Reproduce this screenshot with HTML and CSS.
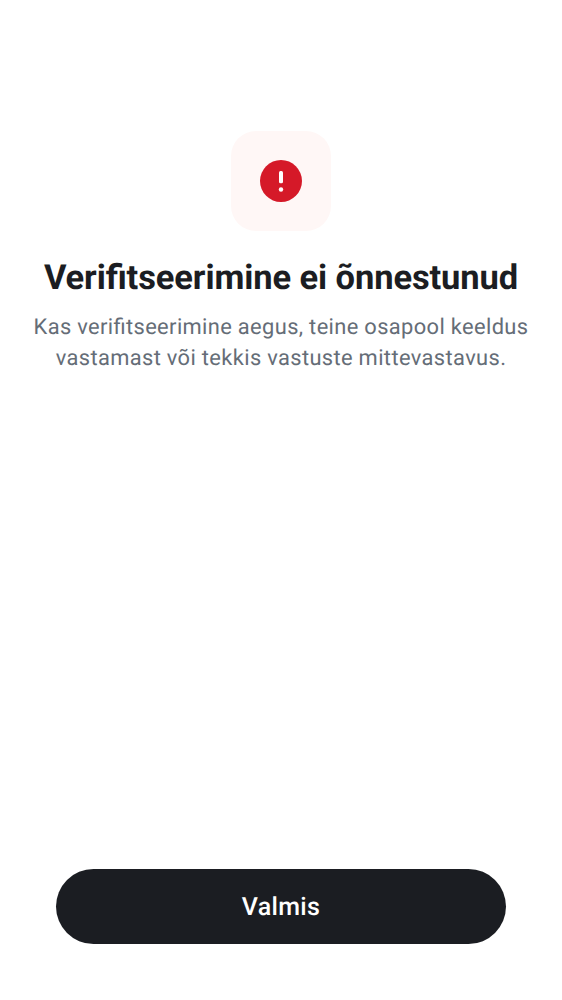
FILE: index.html
```
<!DOCTYPE html>
<html lang="et">
<head>
<meta charset="utf-8">
<title>Verifitseerimine</title>
<link rel="stylesheet" href="styles.css">
</head>
<body>
<main class="screen">
  <div class="badge">
    <svg class="badge-icon" viewBox="0 0 42 42" aria-hidden="true">
      <circle cx="21" cy="21" r="21" fill="#d51928"/>
      <rect x="19" y="11" width="4" height="12.2" rx="1.5" fill="#fff"/>
      <circle cx="21" cy="29.5" r="2.2" fill="#fff"/>
    </svg>
  </div>
  <h1 class="title">Verifitseerimine ei õnnestunud</h1>
  <p class="message">Kas verifitseerimine aegus, teine osapool keeldus<br>vastamast või tekkis vastuste mittevastavus.</p>
  <button class="done">Valmis</button>
</main>
</body>
</html>
```

FILE: styles.css
```
body {
  margin: 0;
  background: #fff;
  font-family: Roboto, sans-serif;
  text-rendering: geometricPrecision;
}

.screen {
  box-sizing: border-box;
  height: 1000px;
  padding: 131px 0 56px;
  display: flex;
  flex-direction: column;
  align-items: center;
}

.badge {
  width: 100px;
  height: 100px;
  border-radius: 25px;
  background: #fff7f6;
  display: flex;
  align-items: center;
  justify-content: center;
}

.badge-icon {
  width: 42px;
  height: 42px;
}

.title {
  margin: 25px 0 0;
  font-size: 34.5px;
  line-height: 44px;
  font-weight: 700;
  letter-spacing: -0.1px;
  font-feature-settings: "liga" 1;
  color: #1b1d22;
  white-space: nowrap;
}

.message {
  margin: 12px 0 0;
  font-size: 21.875px;
  line-height: 31px;
  letter-spacing: 0.38px;
  word-spacing: -0.2px;
  font-feature-settings: "liga" 1;
  color: #656d77;
  text-align: center;
  white-space: nowrap;
}

.done {
  margin: auto 0 0;
  width: 450px;
  height: 75px;
  padding: 2px 0 0;
  border: 0;
  border-radius: 38px;
  background: #1b1d22;
  color: #fff;
  font: 500 25px/31px Roboto, sans-serif;
  letter-spacing: 0.35px;
  text-rendering: geometricPrecision;
}
```
